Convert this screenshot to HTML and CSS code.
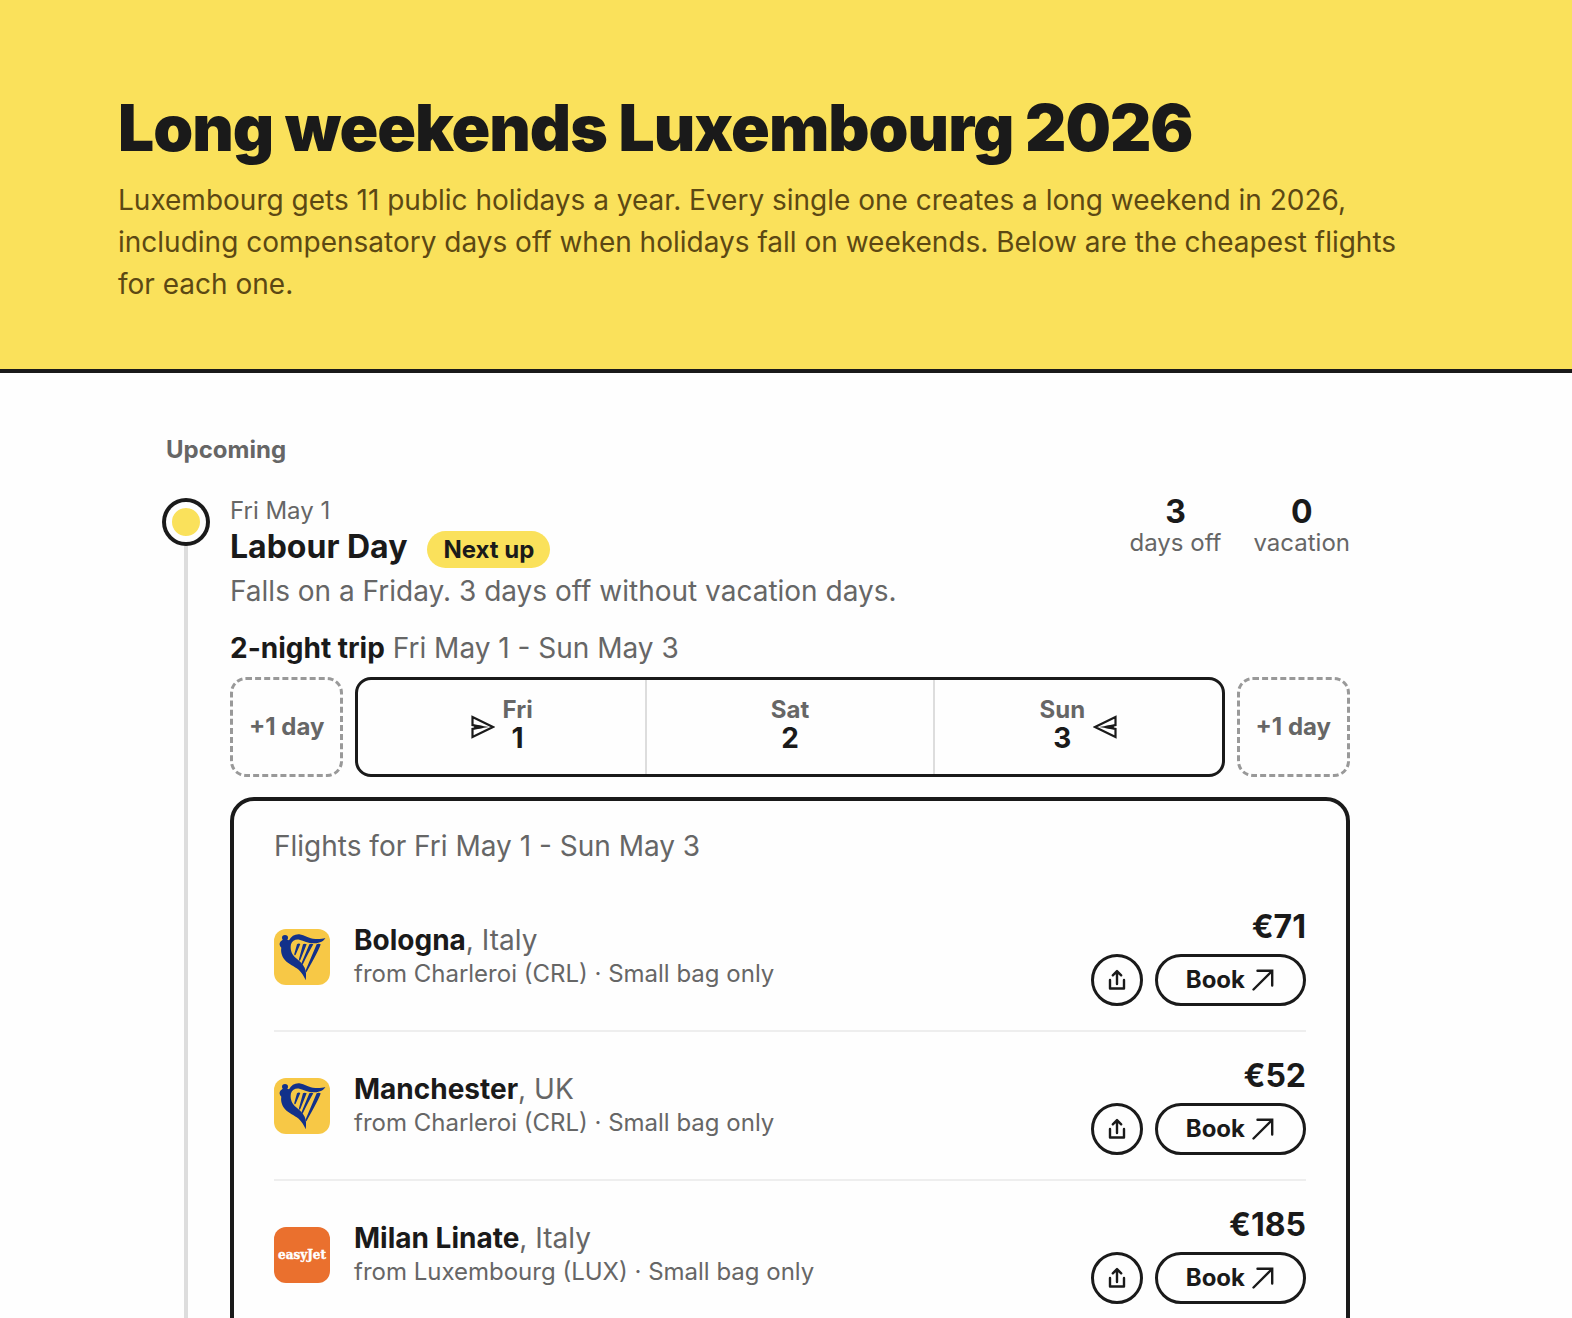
FILE: index.html
```html
<!DOCTYPE html>
<html lang="en">
<head>
<meta charset="utf-8">
<meta name="viewport" content="width=device-width, initial-scale=1">
<title>Long weekends Luxembourg 2026</title>
<link rel="stylesheet" href="styles.css">
</head>
<body>
<svg class="sprite" aria-hidden="true">
  <symbol id="plane" viewBox="0 0 24 24">
    <path d="M1.500 2 22 12 1.500 22V14L12 12 1.500 10Z" fill="none" stroke="currentColor" stroke-width="2.200"/>
    <path d="M1 9.500 18 12 1 14.500 3.500 12Z" fill="currentColor"/>
  </symbol>
  <symbol id="share" viewBox="0 0 20 24">
    <path d="M3 12V20.500H17V12M10 16V3.500M5.800 7.300 10 3.100 14.200 7.300" fill="none" stroke="currentColor" stroke-width="2.400" stroke-linecap="round" stroke-linejoin="round"/>
  </symbol>
  <symbol id="arrow" viewBox="0 0 22 22">
    <path d="M1.500 20.500 20 2M5.500 1.800H20.200V16.500" fill="none" stroke="currentColor" stroke-width="2.400" stroke-linecap="round"/>
  </symbol>
  <symbol id="ryanair" viewBox="0 0 168 168">
    <rect width="168" height="168" fill="#f7c846"/>
    <g fill="#12318a">
      <ellipse cx="33" cy="26" rx="9" ry="8"/>
      <path d="M26 32 40 32 45 34C52 22 62 15 76 16 92 18 104 29 124 30 136 31 146 29 154 27 150 36 138 42 122 43 104 44 90 36 76 32 64 30 54 36 51 46 48 60 52 74 62 84 74 94 86 104 92 116 97 128 97 140 95 154 90 142 84 132 74 122 62 112 44 106 32 92 22 80 20 66 22 56 16 50 15 44 19 38Z"/>
      <path d="M69 46Q74 42 79 45L65 77Q60 82 61 74ZM87 46Q92 42 98 46L79 93Q74 98 75 90ZM106 46Q112 42 118 46Q104 70 87 105Q81 112 83 101ZM128 46Q134 42 140 46Q134 66 98 128Q94 134 95 124Z"/>
    </g>
  </symbol>
  <symbol id="easyjet" viewBox="0 0 56 56">
    <rect width="56" height="56" fill="#ea702e"/>
    <text class="easyjet-word" x="28" y="32" text-anchor="middle">easyJet</text>
  </symbol>
</svg>

<header class="hero">
  <div class="hero-inner">
    <h1>Long weekends Luxembourg 2026</h1>
    <p>Luxembourg gets 11 public holidays a year. Every single one creates a long weekend in 2026, including compensatory days off when holidays fall on weekends. Below are the cheapest flights for each one.</p>
  </div>
</header>

<main class="timeline">
  <h2 class="group-title">Upcoming</h2>
  <article class="entry">
    <div class="rail"><span class="dot"></span></div>
    <div class="entry-body">
      <div class="entry-head">
        <div>
          <time class="date" datetime="2026-05-01">Fri May 1</time>
          <div class="title-row">
            <h3>Labour Day</h3>
            <span class="badge">Next up</span>
          </div>
          <p class="note">Falls on a Friday. 3 days off without vacation days.</p>
        </div>
        <dl class="stats">
          <div><dd>3</dd><dt>days off</dt></div>
          <div><dd>0</dd><dt>vacation</dt></div>
        </dl>
      </div>

      <p class="trip"><strong>2-night trip</strong> Fri May 1 - Sun May 3</p>
      <div class="days">
        <button class="extend" type="button">+1 day</button>
        <ol class="range">
          <li><svg class="plane"><use href="#plane"/></svg><span class="day"><span>Fri</span><b>1</b></span></li>
          <li><span class="day"><span>Sat</span><b>2</b></span></li>
          <li><span class="day"><span>Sun</span><b>3</b></span><svg class="plane back"><use href="#plane"/></svg></li>
        </ol>
        <button class="extend" type="button">+1 day</button>
      </div>

      <section class="flights">
        <h4>Flights for Fri May 1 - Sun May 3</h4>
        <ul>
          <li class="flight">
            <svg class="logo" role="img" aria-label="Ryanair"><use href="#ryanair"/></svg>
            <div class="route">
              <p class="city"><strong>Bologna</strong>, Italy</p>
              <p class="detail">from Charleroi (CRL) · Small bag only</p>
            </div>
            <div class="offer">
              <span class="price">€71</span>
              <div class="actions">
                <button class="share" type="button" aria-label="Share"><svg><use href="#share"/></svg></button>
                <a class="book" href="#">Book <svg><use href="#arrow"/></svg></a>
              </div>
            </div>
          </li>
          <li class="flight">
            <svg class="logo" role="img" aria-label="Ryanair"><use href="#ryanair"/></svg>
            <div class="route">
              <p class="city"><strong>Manchester</strong>, UK</p>
              <p class="detail">from Charleroi (CRL) · Small bag only</p>
            </div>
            <div class="offer">
              <span class="price">€52</span>
              <div class="actions">
                <button class="share" type="button" aria-label="Share"><svg><use href="#share"/></svg></button>
                <a class="book" href="#">Book <svg><use href="#arrow"/></svg></a>
              </div>
            </div>
          </li>
          <li class="flight">
            <svg class="logo" role="img" aria-label="easyJet"><use href="#easyjet"/></svg>
            <div class="route">
              <p class="city"><strong>Milan Linate</strong>, Italy</p>
              <p class="detail">from Luxembourg (LUX) · Small bag only</p>
            </div>
            <div class="offer">
              <span class="price">€185</span>
              <div class="actions">
                <button class="share" type="button" aria-label="Share"><svg><use href="#share"/></svg></button>
                <a class="book" href="#">Book <svg><use href="#arrow"/></svg></a>
              </div>
            </div>
          </li>
        </ul>
      </section>
    </div>
  </article>
</main>
</body>
</html>
```
FILE: styles.css
```css
:root {
  --ink: #1a1a1a;
  --muted: #666;
  --yellow: #fae15b;
  --line: #ddd;
}

* { box-sizing: border-box; margin: 0; padding: 0; }

body {
  height: 100vh;
  overflow: hidden;
  background: #fefefe;
  color: var(--ink);
  font-family: Inter, "Liberation Sans", sans-serif;
  font-size: 28px;
  line-height: 34px;
}

ul, ol { list-style: none; }
button { font: inherit; color: inherit; background: none; cursor: pointer; }
strong, b { font-weight: 700; }
.sprite { display: none; }

.hero {
  padding: 96px 40px 64px;
  background: var(--yellow);
  border-bottom: 4px solid var(--ink);
}
.hero-inner { max-width: 1336px; margin: 0 auto; }
.hero h1 {
  margin-bottom: 19px;
  font-size: 64px;
  line-height: 64px;
  font-weight: 900;
  letter-spacing: -1px;
}
.hero p { max-width: 1300px; line-height: 42px; color: #5c4813; }

.timeline {
  max-width: 1240px;
  margin: 0 auto;
  padding: 61px 56px 60px 0;
}
.group-title {
  margin-bottom: 28px;
  font-size: 24px;
  line-height: 32px;
  font-weight: 700;
  color: var(--muted);
}

.entry { display: flex; gap: 24px; }
.rail {
  flex: none;
  width: 40px;
  padding-top: 8px;
  background: linear-gradient(var(--line), var(--line)) center 30px / 4px 100% no-repeat;
}
.dot {
  display: block;
  height: 40px;
  border: 6px solid #fefefe;
  border-radius: 50%;
  background: var(--yellow);
  box-shadow: 0 0 0 4px var(--ink);
}
.entry-body { flex: 1; min-width: 0; }

.entry-head { display: flex; justify-content: space-between; gap: 24px; }
.date { display: block; font-size: 24px; line-height: 34px; color: var(--muted); }
.title-row { display: flex; align-items: baseline; gap: 20px; }
.title-row h3 { font-size: 32px; line-height: 38px; font-weight: 700; }
.badge {
  padding: 4px 16px;
  border-radius: 20px;
  background: var(--yellow);
  font-size: 24px;
  line-height: 29px;
  font-weight: 700;
}
.note { margin-top: 6px; color: var(--muted); }

.stats { display: flex; gap: 32px; text-align: center; }
.stats dd { font-size: 32px; line-height: 36px; font-weight: 700; }
.stats dt { font-size: 24px; line-height: 26px; color: var(--muted); }

.trip { margin-top: 23px; color: var(--muted); }
.trip strong { color: var(--ink); }

.days { display: flex; gap: 12px; height: 100px; margin-top: 12px; }
.extend {
  padding: 0 16px;
  border: 3px dashed #999;
  border-radius: 16px;
  font-size: 24px;
  font-weight: 700;
  color: var(--muted);
}
.range {
  flex: 1;
  display: flex;
  border: 3px solid var(--ink);
  border-radius: 16px;
}
.range li {
  flex: 1;
  display: flex;
  align-items: center;
  justify-content: center;
  gap: 8px;
}
.range li + li { border-left: 2px solid var(--line); }
.day { display: flex; flex-direction: column; align-items: center; padding-bottom: 6px; line-height: 29px; }
.day span { font-size: 24px; font-weight: 700; color: var(--muted); }
.plane { width: 24px; height: 24px; }
.back { transform: scaleX(-1); }

.flights {
  margin-top: 20px;
  padding: 24px 40px;
  border: 4px solid var(--ink);
  border-radius: 24px;
}
.flights h4 {
  margin-bottom: 16px;
  line-height: 42px;
  font-weight: 400;
  color: var(--muted);
}
.flight {
  display: flex;
  align-items: center;
  gap: 24px;
  padding: 24px 0;
  border-bottom: 2px solid #eee;
}
.flight:last-child { border-bottom: 0; }
.logo { flex: none; width: 56px; height: 56px; border-radius: 12px; }
.easyjet-word { fill: #fff; stroke: #fff; stroke-width: 0.4px; font: 700 12px "DejaVu Serif", serif; }
.route { flex: 1; color: var(--muted); }
.city strong { color: var(--ink); }
.detail { margin-top: 1px; font-size: 24px; line-height: 32px; }
.offer { display: flex; flex-direction: column; align-items: flex-end; gap: 8px; }
.price { font-size: 32px; line-height: 39px; font-weight: 700; }
.actions { display: flex; gap: 12px; }
.share, .book {
  display: flex;
  align-items: center;
  justify-content: center;
  height: 52px;
  border: 3px solid var(--ink);
  border-radius: 26px;
}
.share { width: 52px; }
.share svg { width: 20px; height: 24px; }
.book {
  gap: 7px;
  padding: 0 29px 0 28px;
  font-size: 24px;
  font-weight: 700;
  color: inherit;
  text-decoration: none;
}
.book svg { width: 22px; height: 22px; }
```
